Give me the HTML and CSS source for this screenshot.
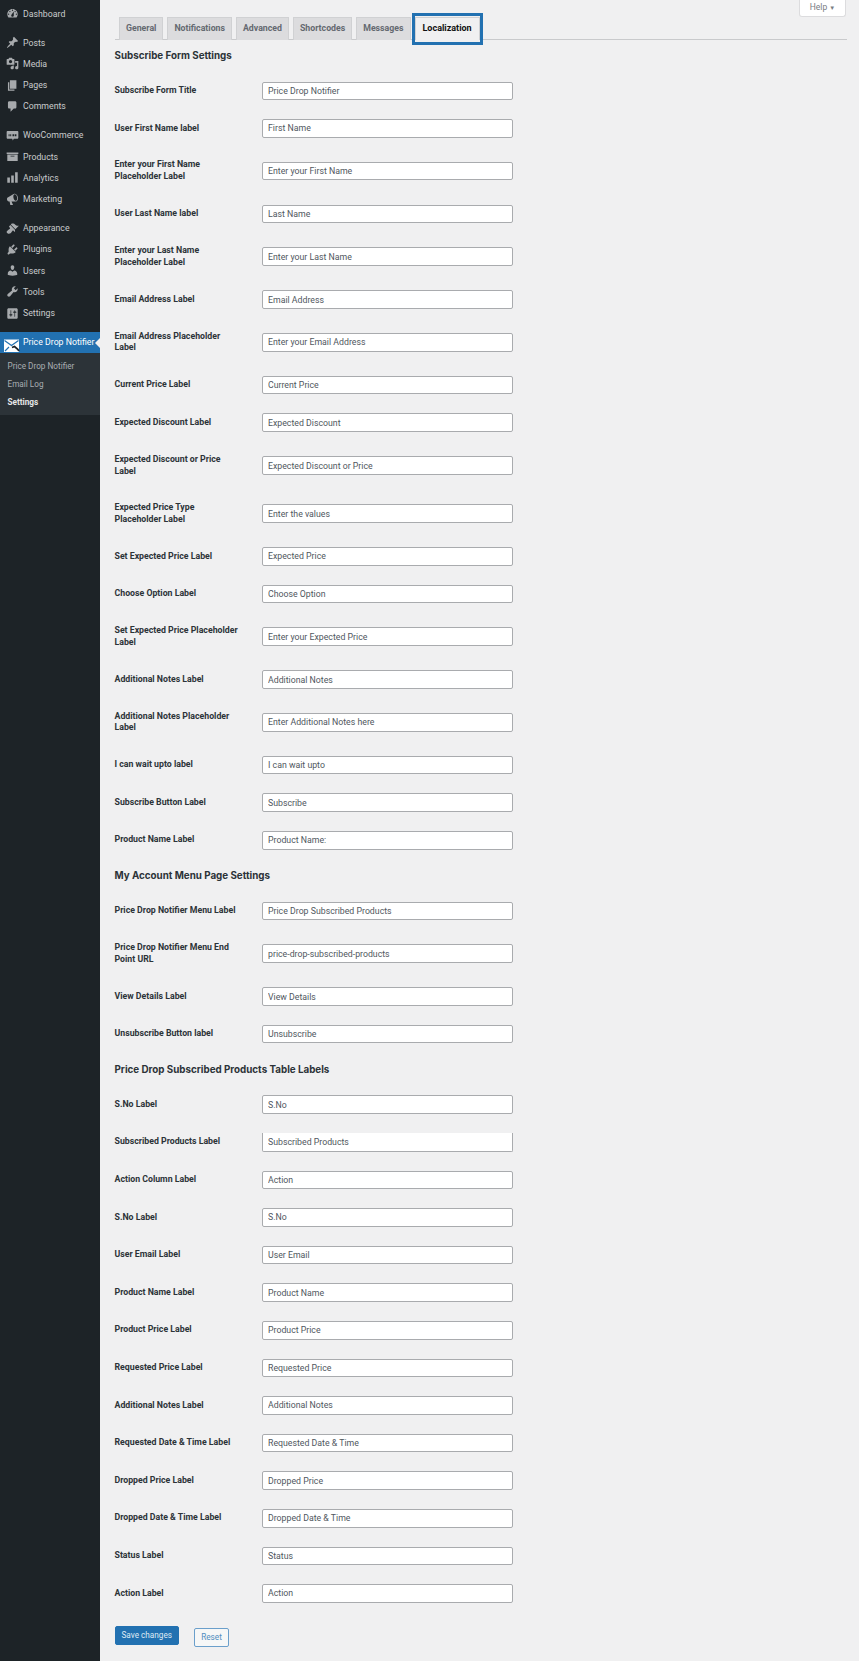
FILE: index.html
```html
<!DOCTYPE html>
<html lang="en">
<head>
    <meta charset="UTF-8">
    <meta name="viewport" content="width=device-width, initial-scale=1.0">
    <title>Price Drop Notifier Settings</title>
    <link rel="stylesheet" href="styles.css">
</head>
<body>

<div class="wrap">
    <nav class="sidebar">
        <ul class="menu">
            <li><svg viewBox="0 0 20 20"><path d="M3.76 16h12.48c1.1-1.37 1.76-3.11 1.76-5 0-4.42-3.58-8-8-8s-8 3.58-8 8c0 1.89.66 3.63 1.76 5zM10 4c.55 0 1 .45 1 1s-.45 1-1 1-1-.45-1-1 .45-1 1-1zM6 6c.55 0 1 .45 1 1s-.45 1-1 1-1-.45-1-1 .45-1 1-1zm8 0c.55 0 1 .45 1 1s-.45 1-1 1-1-.45-1-1 .45-1 1-1zm-5.37 5.55L12 7v6c0 1.1-.9 2-2 2s-2-.9-2-2c0-.57.24-1.08.63-1.45zM4 10c.55 0 1 .45 1 1s-.45 1-1 1-1-.45-1-1 .45-1 1-1zm12 0c.55 0 1 .45 1 1s-.45 1-1 1-1-.45-1-1 .45-1 1-1z"/></svg>Dashboard</li>
        </ul>
        <ul class="menu">
            <li><svg viewBox="0 0 20 20"><path d="M10.44 3.02l1.82-1.82 6.36 6.35-1.83 1.82c-1.05-.68-2.48-.57-3.41.36l-.75.75c-.92.93-1.04 2.35-.35 3.41l-1.83 1.82-2.41-2.41-2.8 2.79c-.42.42-3.38 2.71-3.8 2.29s1.86-3.39 2.28-3.81l2.79-2.79L4.1 9.36l1.83-1.82c1.05.69 2.48.57 3.4-.36l.75-.75c.93-.92 1.05-2.35.36-3.41z"/></svg>Posts</li>
            <li><svg viewBox="0 0 20 20"><path d="M13 11V4c0-.55-.45-1-1-1h-1.67L9 1H5L3.67 3H2c-.55 0-1 .45-1 1v7c0 .55.45 1 1 1h10c.55 0 1-.45 1-1zM7 4.5c1.38 0 2.5 1.12 2.5 2.5S8.38 9.5 7 9.5 4.5 8.38 4.5 7 5.62 4.5 7 4.5zM14 6h5v10.5c0 1.38-1.12 2.5-2.5 2.5S14 17.88 14 16.5s1.12-2.5 2.5-2.5c.17 0 .34.02.5.05V9h-3V6zm-4 8.05V13h2v3.5c0 1.38-1.12 2.5-2.5 2.5S7 17.88 7 16.5 8.12 14 9.5 14c.17 0 .34.02.5.05z"/></svg>Media</li>
            <li><svg viewBox="0 0 20 20"><path d="M6 15V2h10v13H6zm-1 1h8v2H3V5h2v11z"/></svg>Pages</li>
            <li><svg viewBox="0 0 20 20"><path d="M5 2h9c1.1 0 2 .9 2 2v7c0 1.1-.9 2-2 2h-2l-5 5v-5H5c-1.1 0-2-.9-2-2V4c0-1.1.9-2 2-2z"/></svg>Comments</li>
        </ul>
        <ul class="menu">
            <li><svg viewBox="0 0 20 20"><path fill-rule="evenodd" d="M2.500 3h15C18.300 3 19 3.700 19 4.500v9c0 .8-.7 1.500-1.500 1.500H12l-1.500 2.500L9.500 15h-7C1.700 15 1 14.300 1 13.500v-9C1 3.700 1.700 3 2.500 3zM4 8v3h1.500V8H4zm2.500 0v3H8V8H6.500zm3.500 0v3h2.500V8H10zm3.500 0v3H16V8h-2.500z"/></svg>WooCommerce</li>
            <li><svg viewBox="0 0 20 20"><path d="M19 4v2H1V4h18zM2 7h16v10H2V7zm11 3V9H7v1h6z"/></svg>Products</li>
            <li><svg viewBox="0 0 20 20"><path d="M18 18V2h-4v16h4zm-6 0V7H8v11h4zm-6 0v-8H2v8h4z"/></svg>Analytics</li>
            <li><svg viewBox="0 0 20 20"><path d="M18.150 5.940c.46 1.620.38 3.220-.02 4.480-.42 1.280-1.260 2.180-2.300 2.480-.5.150-1 .1-1.500.1H8.500l2.220 5c.1.300-.2.500-.48.500H7c-.2 0-.4-.200-.48-.500l-1-5H4.250c-.5.060-1.080-.180-1.540-.620s-.880-1.080-1.060-1.880c-.240-.800-.200-1.560-.020-2.200.180-.620.580-1.080 1.060-1.300l9-5.400c.3-.2.500-.300.980-.460 1.040-.300 2.240.100 3.220 1 .980.880 1.800 2.240 2.260 3.860zm-2.580 5.980c1.400-.400 2.100-2.700 1.400-5.720-.700-2.900-2.500-4.500-4-4.100-1.500.400-2.100 2.800-1.400 5.500.700 2.900 2.600 4.700 4 4.320z"/></svg>Marketing</li>
        </ul>
        <ul class="menu">
            <li><svg viewBox="0 0 20 20"><path d="M14.480 11.060L7.410 3.990l1.500-1.500c.5-.560 2.300-.470 3.510.320 1.210.800 1.430 1.280 2.910 2.100 1.180.640 2.450 1.260 4.450.850zm-.710.710L6.700 4.700 4.930 6.470c-.390.390-.390 1.020 0 1.410l1.060 1.060c.390.390.390 1.030 0 1.420-.600.600-1.430 1.110-2.210 1.690-.350.260-.700.530-1.010.84C1.430 13.230 1 14.480 1 15.500c0 .820.450 1.500 1.270 1.960.140.080.280.160.430.220 1.410.580 3.690.250 4.870-.920.310-.310.580-.670.840-1.010.580-.780 1.090-1.600 1.690-2.210.390-.390 1.030-.390 1.420 0l1.060 1.060c.390.390 1.020.390 1.410 0z"/></svg>Appearance</li>
            <li><svg viewBox="0 0 20 20"><path d="M13.110 4.360L9.870 7.600 8 5.730l3.240-3.240c.350-.340 1.050-.200 1.560.320.520.510.660 1.210.310 1.550zm-8 1.770l.910-1.120 9.010 9.010-1.190.840c-.710.710-2.630 1.160-3.820 1.160H6.140L4.900 17.260c-.590.590-1.540.590-2.120 0-.590-.580-.590-1.530 0-2.120l1.240-1.240v-3.880c0-1.130.400-3.190 1.090-3.890zm7.260 3.970l3.240-3.240c.340-.350 1.040-.210 1.550.310.520.510.660 1.210.310 1.550l-3.240 3.250z"/></svg>Plugins</li>
            <li><svg viewBox="0 0 20 20"><path d="M10 9.250c-2.270 0-2.730-3.440-2.730-3.440C7 4.020 7.820 2 9.970 2c2.160 0 2.980 2.020 2.710 3.810 0 0-.410 3.440-2.680 3.440zm0 2.570L12.720 10c2.390 0 4.520 2.330 4.520 4.530v2.490s-3.650 1.130-7.240 1.130c-3.650 0-7.240-1.130-7.240-1.130v-2.490c0-2.250 1.940-4.480 4.470-4.480z"/></svg>Users</li>
            <li><svg viewBox="0 0 20 20"><path d="M16.680 9.770c-1.340 1.340-3.300 1.670-4.950.990l-5.410 6.520c-.990.990-2.590.990-3.580 0s-.990-2.590 0-3.570l6.520-5.420c-.680-1.650-.350-3.610.990-4.950 1.280-1.280 3.120-1.620 4.720-1.060l-2.890 2.890 2.820 2.820 2.860-2.870c.530 1.580.180 3.390-1.080 4.650z"/></svg>Tools</li>
            <li><svg viewBox="0 0 20 20"><path d="M18 16V4c0-1.100-.900-2-2-2H4c-1.100 0-2 .900-2 2v12c0 1.100.900 2 2 2h12c1.100 0 2-.900 2-2zM8 11h1c.550 0 1 .450 1 1s-.450 1-1 1H8v1.500c0 .280-.220.500-.500.500s-.500-.220-.500-.500V13H6c-.550 0-1-.450-1-1s.450-1 1-1h1V5.500c0-.280.220-.500.500-.500s.500.220.500.500V11zm5-2h-1c-.550 0-1-.450-1-1s.450-1 1-1h1V5.500c0-.280.220-.500.500-.500s.500.220.500.500V7h1c.550 0 1 .450 1 1s-.450 1-1 1h-1v5.500c0 .280-.220.500-.500.500s-.500-.220-.500-.500V9z"/></svg>Settings</li>
        </ul>
        <div class="menu-active">
            <div class="active-item">
                <svg class="mail-icon" viewBox="0 0 17 15"><path d="M1 1.500h15V14H1z" fill="#fff"/><path d="M1.500 2.500l7 5 7-5M2 13l4-4" fill="none" stroke="#2271b1" stroke-width="1.200"/><path d="M9 9.500l2.500-1 3 2.500 1.500 2" fill="none" stroke="#1d2327" stroke-width="1.800"/></svg>
                Price Drop Notifier
            </div>
            <ul class="submenu">
                <li>Price Drop Notifier</li>
                <li>Email Log</li>
                <li class="current">Settings</li>
            </ul>
        </div>
    </nav>

    <main class="content">
        <a class="help-btn">Help <span class="arrow">▼</span></a>

        <div class="tabs">
            <span class="tab">General</span>
            <span class="tab">Notifications</span>
            <span class="tab">Advanced</span>
            <span class="tab">Shortcodes</span>
            <span class="tab">Messages</span>
            <span class="tab tab-active">Localization</span>
        </div>

        <form>
            <h2>Subscribe Form Settings</h2>
            <div class="row"><label>Subscribe Form Title</label><input type="text" value="Price Drop Notifier"></div>
            <div class="row"><label>User First Name label</label><input type="text" value="First Name"></div>
            <div class="row"><label>Enter your First Name Placeholder Label</label><input type="text" value="Enter your First Name"></div>
            <div class="row"><label>User Last Name label</label><input type="text" value="Last Name"></div>
            <div class="row"><label>Enter your Last Name Placeholder Label</label><input type="text" value="Enter your Last Name"></div>
            <div class="row"><label>Email Address Label</label><input type="text" value="Email Address"></div>
            <div class="row"><label>Email Address Placeholder Label</label><input type="text" value="Enter your Email Address"></div>
            <div class="row"><label>Current Price Label</label><input type="text" value="Current Price"></div>
            <div class="row"><label>Expected Discount Label</label><input type="text" value="Expected Discount"></div>
            <div class="row"><label>Expected Discount or Price Label</label><input type="text" value="Expected Discount or Price"></div>
            <div class="row"><label>Expected Price Type Placeholder Label</label><input type="text" value="Enter the values"></div>
            <div class="row"><label>Set Expected Price Label</label><input type="text" value="Expected Price"></div>
            <div class="row"><label>Choose Option Label</label><input type="text" value="Choose Option"></div>
            <div class="row"><label>Set Expected Price Placeholder Label</label><input type="text" value="Enter your Expected Price"></div>
            <div class="row"><label>Additional Notes Label</label><input type="text" value="Additional Notes"></div>
            <div class="row"><label>Additional Notes Placeholder Label</label><input type="text" value="Enter Additional Notes here"></div>
            <div class="row"><label>I can wait upto label</label><input type="text" value="I can wait upto"></div>
            <div class="row"><label>Subscribe Button Label</label><input type="text" value="Subscribe"></div>
            <div class="row"><label>Product Name Label</label><input type="text" value="Product Name:"></div>

            <h2>My Account Menu Page Settings</h2>
            <div class="row"><label>Price Drop Notifier Menu Label</label><input type="text" value="Price Drop Subscribed Products"></div>
            <div class="row"><label>Price Drop Notifier Menu End Point URL</label><input type="text" value="price-drop-subscribed-products"></div>
            <div class="row"><label>View Details Label</label><input type="text" value="View Details"></div>
            <div class="row"><label>Unsubscribe Button label</label><input type="text" value="Unsubscribe"></div>

            <h2>Price Drop Subscribed Products Table Labels</h2>
            <div class="row"><label>S.No Label</label><input type="text" value="S.No"></div>
            <div class="row"><label>Subscribed Products Label</label><input class="no-top" type="text" value="Subscribed Products"></div>
            <div class="row"><label>Action Column Label</label><input type="text" value="Action"></div>
            <div class="row"><label>S.No Label</label><input type="text" value="S.No"></div>
            <div class="row"><label>User Email Label</label><input type="text" value="User Email"></div>
            <div class="row"><label>Product Name Label</label><input type="text" value="Product Name"></div>
            <div class="row"><label>Product Price Label</label><input type="text" value="Product Price"></div>
            <div class="row"><label>Requested Price Label</label><input type="text" value="Requested Price"></div>
            <div class="row"><label>Additional Notes Label</label><input type="text" value="Additional Notes"></div>
            <div class="row"><label>Requested Date &amp; Time Label</label><input type="text" value="Requested Date &amp; Time"></div>
            <div class="row"><label>Dropped Price Label</label><input type="text" value="Dropped Price"></div>
            <div class="row"><label>Dropped Date &amp; Time Label</label><input type="text" value="Dropped Date &amp; Time"></div>
            <div class="row"><label>Status Label</label><input type="text" value="Status"></div>
            <div class="row"><label>Action Label</label><input type="text" value="Action"></div>

            <div class="buttons">
                <button type="button" class="btn-save">Save changes</button>
                <button type="button" class="btn-reset">Reset</button>
            </div>
        </form>
    </main>
</div>

</body>
</html>
```

FILE: styles.css
```css
* {
    box-sizing: border-box;
}
body {
    margin: 0;
    background: #f0f0f1;
    font-family: Roboto, "Liberation Sans", sans-serif;
    font-size: 8.75px;
    color: #3c434a;
}
.wrap {
    display: flex;
    height: 1661px;
    overflow: hidden;
}

/* admin menu */
.sidebar {
    width: 100px;
    flex-shrink: 0;
    background: #1d2327;
    padding-top: 3px;
    color: #f0f0f1;
}
.menu {
    list-style: none;
    margin: 0 0 7.6px;
    padding: 0;
}
.menu li {
    display: flex;
    align-items: center;
    height: 21.3px;
    padding-left: 6px;
    color: #c9cbcd;
}
.menu svg {
    width: 13px;
    height: 13px;
    margin-right: 4px;
    fill: #a7aaad;
    flex-shrink: 0;
}
.active-item {
    position: relative;
    display: flex;
    align-items: center;
    height: 21.5px;
    padding-left: 3px;
    background: #2271b1;
    color: #fff;
}
.active-item::after {
    content: "";
    position: absolute;
    right: 0;
    top: 6px;
    border: 5px solid transparent;
    border-right-color: #f0f0f1;
    border-left: 0;
}
.mail-icon {
    position: relative;
    top: 3px;
    width: 17px;
    height: 15px;
    margin-right: 3px;
}
.submenu {
    list-style: none;
    margin: 0;
    padding: 4px 0 4px 7.5px;
    background: #2c3338;
    font-size: 8.2px;
    color: #a9aeb3;
}
.submenu li {
    height: 18px;
    line-height: 18px;
}
.submenu .current {
    color: #e6e7e8;
    font-weight: 700;
}

/* main area */
.content {
    position: relative;
    flex: 1;
    padding: 17px 12px 0 14.5px;
}
.help-btn {
    position: absolute;
    top: 0;
    right: 13px;
    width: 47px;
    height: 17px;
    background: #fff;
    border: 1px solid #dcdcde;
    border-top: 0;
    border-radius: 0 0 3px 3px;
    text-align: center;
    line-height: 15px;
    font-size: 8.5px;
    color: #787c82;
}
.help-btn .arrow {
    font-size: 6px;
}
.tabs {
    display: flex;
    gap: 4px;
    height: 23px;
    margin-bottom: -1px;
    padding-left: 4.5px;
    border-bottom: 1px solid #c9cacc;
}
.tab {
    height: 23px;
    padding: 0 6px;
    line-height: 21px;
    background: #dcdcde;
    border: 1px solid #d0d1d3;
    border-bottom: 0;
    font-size: 8.75px;
    font-weight: 700;
    color: #646970;
}
.tab-active {
    position: relative;
    padding: 0 7px;
    background: #f0f0f1;
    font-size: 9px;
    color: #111;
}
.tab-active::after {
    content: "";
    position: absolute;
    left: -4px;
    right: -4px;
    top: -5px;
    bottom: -5px;
    border: 3px solid #2271b1;
}
h2 {
    margin: 0;
    height: 33px;
    line-height: 33px;
    font-family: Inter, Roboto, sans-serif;
    font-size: 9.8px;
    font-weight: 700;
    color: #2c3338;
}
.row {
    display: flex;
    align-items: center;
    min-height: 37.6px;
}
label {
    width: 147.5px;
    padding: 12.3px 21px 12.3px 0;
    flex-shrink: 0;
    font-weight: 700;
    line-height: 11.7px;
    color: #2c3338;
}
input {
    width: 251px;
    height: 18.6px;
    padding: 0 5px;
    background: #fff;
    border: 1px solid #a9abae;
    border-radius: 2px;
    font-family: inherit;
    font-size: 8.75px;
    color: #50575e;
}
.no-top {
    border-top: 0;
    border-radius: 0 0 2px 2px;
}
.buttons {
    display: flex;
    align-items: flex-start;
    gap: 15px;
    padding-top: 13.5px;
}
.btn-save {
    width: 64.5px;
    height: 19px;
    padding: 0;
    background: #2271b1;
    border: 1px solid #2271b1;
    border-radius: 2px;
    font-family: inherit;
    font-size: 8.2px;
    color: #dfeaf4;
}
.btn-reset {
    width: 35px;
    height: 19px;
    margin-top: 2px;
    padding: 0;
    background: #f6f7f7;
    border: 1px solid #6b9fcb;
    border-radius: 2px;
    font-family: inherit;
    font-size: 8.2px;
    color: #4f8dc0;
}
```
